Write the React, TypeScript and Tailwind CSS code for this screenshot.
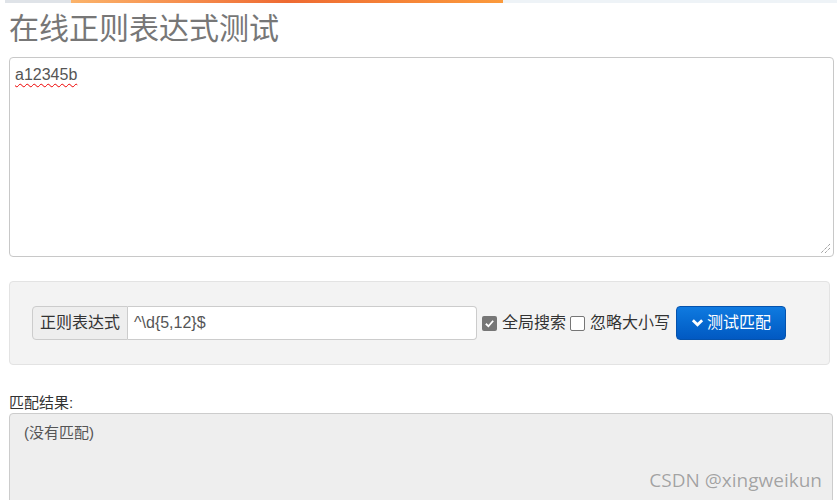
import React from "react";

const cjk = "font-['Liberation_Sans','Noto_Sans_CJK_SC',sans-serif]";

function CheckBox({ checked }: { checked?: boolean }) {
  if (checked) {
    return (
      <span className="inline-flex h-[15px] w-[15px] items-center justify-center rounded-[2px] bg-[#767676]">
        <svg viewBox="0 0 12 12" className="h-[11px] w-[11px]">
          <path d="M2 6.3 L4.8 9 L10 3" fill="none" stroke="#fff" strokeWidth="2" />
        </svg>
      </span>
    );
  }
  return <span className="inline-block h-[15px] w-[15px] rounded-[2px] border border-[#767676] bg-white" />;
}

export default function App() {
  return (
    <div className={`relative h-[500px] w-[837px] overflow-hidden bg-white ${cjk}`}>
      {/* top strip */}
      <div className="flex h-[3px]">
        <div className="w-[5px] bg-white" />
        <div className="w-[66px] bg-[#dfe3e8]" />
        <div className="w-[432px] bg-gradient-to-r from-[#fbb36a] via-[#ee6a32] to-[#fb9a3c]" />
        <div className="flex-1 bg-[#eef3f7]" />
      </div>

      <div className="pl-[9px] pr-[3px]">
        <h1 className="mt-[9px] text-[30px] leading-[33px] text-[#777]">在线正则表达式测试</h1>

        <div className="relative mt-[12px] h-[200px] rounded-[4px] border border-[#c8c8c8] px-[5px] py-[6px] text-[16px] leading-[22px] text-[#555]">
          <span className="underline decoration-wavy decoration-[#e00] decoration-1 underline-offset-[3px]">a12345b</span>
          <svg viewBox="0 0 12 12" className="absolute bottom-[2px] right-[2px] h-[12px] w-[12px]">
            <path d="M11 2 L2 11 M11 6 L6 11" stroke="#777" strokeWidth="1" strokeDasharray="1 1" />
          </svg>
        </div>

        <div className="mr-[4px] mt-[24px] h-[84px] rounded-[4px] border border-[#e3e3e3] bg-[#f3f3f3] pl-[22px] pt-[24px]">
          <div className="flex items-center">
            <div className="flex h-[34px] w-[445px]">
              <span className="flex items-center rounded-l-[4px] border border-[#ccc] bg-[#eee] px-[7px] text-[16px] text-[#333]">
                正则表达式
              </span>
              <span className="flex flex-1 items-center rounded-r-[4px] border border-l-0 border-[#ccc] bg-white pl-[6px] text-[16px] text-[#555]">
                ^\d{"{"}5,12{"}"}$
              </span>
            </div>
            <label className="ml-[5px] flex items-center gap-[5px] text-[16px] text-[#333]">
              <CheckBox checked />
              全局搜索
            </label>
            <label className="ml-[4px] flex items-center gap-[5px] text-[16px] text-[#333]">
              <CheckBox />
              忽略大小写
            </label>
            <button className="ml-[6px] flex h-[34px] w-[110px] items-center justify-center gap-[3px] rounded-[4px] border border-[#0452ad] bg-gradient-to-b from-[#0f7ae0] to-[#0259c2] text-[16px] text-white">
              <svg viewBox="0 0 14 10" className="h-[10px] w-[13px]">
                <path d="M2 2 L7 7 L12 2" fill="none" stroke="#fff" strokeWidth="3" />
              </svg>
              测试匹配
            </button>
          </div>
        </div>

        <div className="mt-[28px] text-[15px] leading-[20px] text-[#333]">匹配结果:</div>
        <div className="mr-[1px] h-[120px] rounded-[4px] border border-[#ccc] bg-[#eee] pl-[14px] pt-[8px] text-[15px] leading-[22px] text-[#555]">
          (没有匹配)
        </div>
      </div>

      <div className="absolute bottom-[7px] right-[15px] font-['Open_Sans',sans-serif] text-[19px] leading-[26px] text-[#a3a3a3] [text-shadow:0_0_1px_#fff]">
        CSDN @xingweikun
      </div>
    </div>
  );
}
